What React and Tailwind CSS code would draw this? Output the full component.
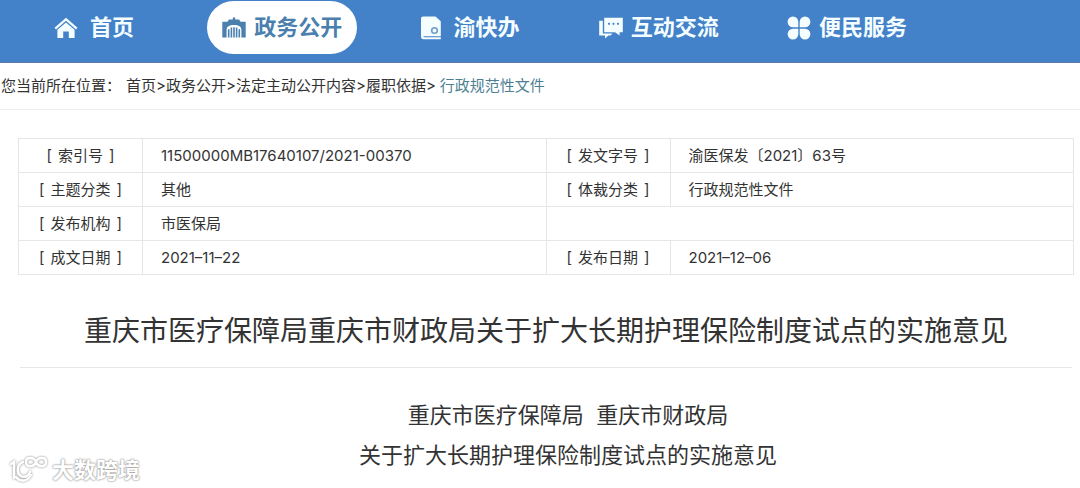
import React from 'react';

const HomeIcon = () => (
  <svg viewBox="0 0 24 22" className="w-6 h-[22px]" fill="currentColor" aria-hidden="true">
    <path d="M12 0.8 L23.5 10.8 L22 12.4 L12 3.8 L2 12.4 L0.5 10.8 Z" />
    <path d="M12 5.4 L20.6 12.8 V21 H14.8 V14.6 H9.2 V21 H3.4 V12.8 Z" />
  </svg>
);

const HallIcon = () => (
  <svg viewBox="0 0 24 22" className="w-6 h-[22px]" fill="currentColor" aria-hidden="true">
    <path d="M10.8 0.5 H13.2 V2.6 H17 L18.6 4.8 H23.7 V20.6 H19.4 V13 C19.4 9.4 16.6 8 12 8 C7.4 8 4.6 9.4 4.6 13 V20.6 H0.3 V4.8 H5.4 L7 2.600 H10.8 Z" />
    <path d="M5.9 12.2 H7.5 V20.6 H5.9 Z M8.6 10.6 H10.2 V20.6 H8.6 Z M11.2 10.2 H12.8 V20.6 H11.2 Z M13.8 10.6 H15.4 V20.6 H13.8 Z M16.5 12.2 H18.1 V20.6 H16.5 Z" />
  </svg>
);

const BookIcon = () => (
  <svg viewBox="0 0 20 24" className="w-5 h-6" fill="currentColor" aria-hidden="true">
    <path d="M2.2 0.5 H14.5 L19.8 5.2 V20.2 H2.6 V21.2 H19.8 V23.2 H2.4 C1 23.2 0 22.2 0 20.8 V2.7 C0 1.4 0.900 0.5 2.2 0.5 Z" />
    <circle cx="13.5" cy="14.5" r="2.8" fill="none" stroke="#6e9cc9" strokeWidth="1.6" />
  </svg>
);

const ChatIcon = () => (
  <svg viewBox="0 0 24 22" className="w-6 h-[22px]" fill="currentColor" aria-hidden="true">
    <path d="M5.2 0.8 H23.8 V15.2 H20.6 V18.6 L16 15.2 H5.2 Z" />
    <path d="M0.2 3.8 H3.8 V16.6 H13.4 L11.6 18.4 H9.4 L6 21.6 V18.4 H0.2 Z" />
    <g fill="#4381c8">
      <circle cx="10" cy="6.8" r="1.1" />
      <circle cx="14.5" cy="6.8" r="1.1" />
      <circle cx="19" cy="6.8" r="1.1" />
    </g>
  </svg>
);

const CloverIcon = () => (
  <svg viewBox="0 0 24 24" className="w-6 h-6" fill="currentColor" aria-hidden="true">
    <path d="M6 0.5 A5.3 5.3 0 0 1 11.3 5.8 V11.3 H6 A5.4 5.4 0 0 1 6 0.5 Z" />
    <path d="M18 0.5 A5.3 5.3 0 0 0 12.7 5.8 V11.3 H18 A5.4 5.4 0 0 0 18 0.5 Z" />
    <path d="M6 23.5 A5.3 5.3 0 0 0 11.3 18.2 V12.7 H6 A5.4 5.4 0 0 0 6 23.5 Z" />
    <path d="M18 23.5 A5.3 5.3 0 0 1 12.7 18.2 V12.7 H18 A5.4 5.4 0 0 1 18 23.5 Z" />
  </svg>
);

const navItems = [
  { label: '首页', icon: HomeIcon, gap: 'gap-3' },
  { label: '政务公开', icon: HallIcon, gap: 'gap-2', active: true },
  { label: '渝快办', icon: BookIcon, gap: 'gap-3' },
  { label: '互动交流', icon: ChatIcon, gap: 'gap-2' },
  { label: '便民服务', icon: CloverIcon, gap: 'gap-2' },
];

const crumbs = ['首页', '政务公开', '法定主动公开内容', '履职依据'];

const rows = [
  ['索引号', '11500000MB17640107/2021-00370', '发文字号', '渝医保发〔2021〕63号'],
  ['主题分类', '其他', '体裁分类', '行政规范性文件'],
  ['发布机构', '市医保局', null, null],
  ['成文日期', '2021–11–22', '发布日期', '2021–12–06'],
];

const labelCell = 'h-[34px] border border-[#e6e6e6] p-0 pt-0.5 font-normal';
const valueCell = 'h-[34px] border border-[#e6e6e6] p-0 pt-0.5 pl-[18px]';

function Label({ text }) {
  return (
    <th className={labelCell}>
      <span className="inline-flex gap-1.5">
        <span>[</span>
        <span>{text}</span>
        <span>]</span>
      </span>
    </th>
  );
}

function NavBar() {
  return (
    <nav className="bg-[#4381c8] border-b border-[#5b7ba6] pr-[139px] pt-px pb-2">
      <ul className="grid grid-cols-5">
        {navItems.map(({ label, icon: Icon, gap, active }) => (
          <li key={label} className="flex justify-center">
            <a
              href="#"
              className={`flex items-center h-[53px] px-[15px] rounded-full text-[22px] font-bold whitespace-nowrap ${gap} ${
                active ? 'bg-white text-[#4a7fae]' : 'text-[#f4fdff]'
              }`}
            >
              <Icon />
              <span>{label}</span>
            </a>
          </li>
        ))}
      </ul>
    </nav>
  );
}

function Breadcrumb() {
  return (
    <div className="flex items-center h-[47px] pl-px border-b border-[#ececec] text-[15px] whitespace-nowrap">
      <span className="mr-[5px]">您当前所在位置：</span>
      {crumbs.map((c) => (
        <React.Fragment key={c}>
          <a href="#">{c}</a>
          <span>&gt;</span>
        </React.Fragment>
      ))}
      <a href="#" className="ml-1 text-[#4d7f92]">行政规范性文件</a>
    </div>
  );
}

function InfoTable() {
  return (
    <table className="w-full table-fixed border-collapse text-[15px]">
      <colgroup>
        <col className="w-[124px]" />
        <col />
        <col className="w-[124px]" />
        <col />
      </colgroup>
      <tbody>
        {rows.map(([k1, v1, k2, v2]) => (
          <tr key={k1}>
            <Label text={k1} />
            <td className={valueCell}>{v1}</td>
            {k2 ? (
              <>
                <Label text={k2} />
                <td className={valueCell}>{v2}</td>
              </>
            ) : (
              <td className={valueCell} colSpan={2}></td>
            )}
          </tr>
        ))}
      </tbody>
    </table>
  );
}

function Watermark() {
  return (
    <div className="absolute left-2 bottom-0.5 flex items-center gap-1 text-white">
      <svg viewBox="0 0 40 30" className="w-10 h-[30px] drop-shadow-[0_0_1px_#888]" fill="none" stroke="currentColor" strokeWidth="2.5" strokeLinecap="round" aria-hidden="true">
        <path d="M3 9 L6 7 V23" />
        <path d="M15 7 C9 9 8 18 13 21 C17 23 21 21 22 17" />
        <path d="M8 22 C12 27 19 27 23 20" />
        <path d="M28 7 C26 1.5 18 1.5 18 7 C18 12.5 26 12.5 28 7 C30 1.500 38 1.500 38 7 C38 12.5 30 12.5 28 7 Z" />
      </svg>
      <span className="text-[22px] leading-8 font-bold [text-shadow:0_0_2px_#888,0_0_2px_#aaa]">大数跨境</span>
    </div>
  );
}

export default function App() {
  return (
    <div className="relative min-h-screen bg-white text-[#333] font-[Inter,'Noto_Sans_CJK_SC',sans-serif]">
      <NavBar />
      <Breadcrumb />
      <main className="pl-[18px] pr-[6px] pt-7">
        <InfoTable />
        <h1 className="mx-[2px] pt-[34px] pb-[14px] border-b border-[#e6e6e6] text-center text-[28px] leading-[44px]">
          重庆市医疗保障局重庆市财政局关于扩大长期护理保险制度试点的实施意见
        </h1>
        <div className="pt-[27px] text-center text-[22px] leading-10">
          <p className="indent-[44px]">重庆市医疗保障局&nbsp; 重庆市财政局</p>
          <p className="indent-[44px]">关于扩大长期护理保险制度试点的实施意见</p>
        </div>
      </main>
      <Watermark />
    </div>
  );
}
